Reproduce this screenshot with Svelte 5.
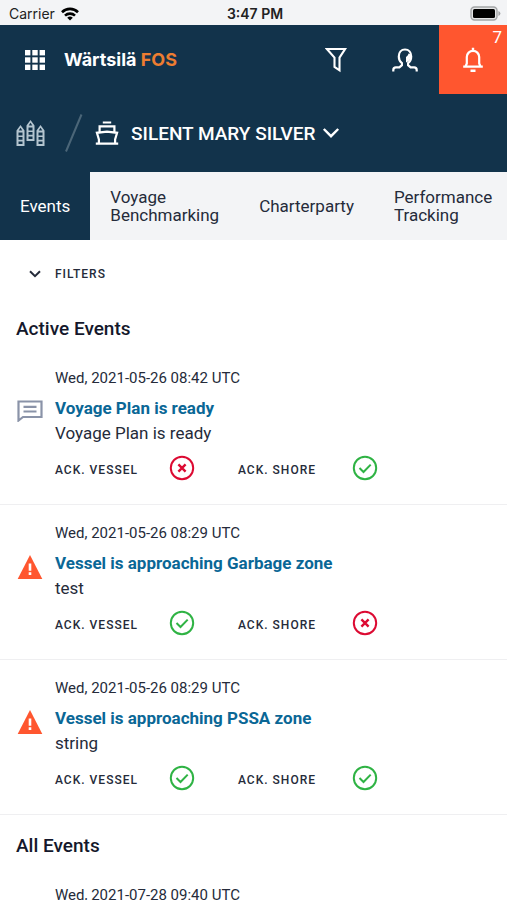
<script>
  const tabs = ['Events', 'Voyage\nBenchmarking', 'Charterparty', 'Performance\nTracking'];
  let active = $state(0);

  const activeEvents = [
    { date: 'Wed, 2021-05-26 08:42 UTC', title: 'Voyage Plan is ready', text: 'Voyage Plan is ready', kind: 'message', vessel: false, shore: true },
    { date: 'Wed, 2021-05-26 08:29 UTC', title: 'Vessel is approaching Garbage zone', text: 'test', kind: 'warning', vessel: true, shore: false },
    { date: 'Wed, 2021-05-26 08:29 UTC', title: 'Vessel is approaching PSSA zone', text: 'string', kind: 'warning', vessel: true, shore: true }
  ];
  const allEvents = [{ date: 'Wed, 2021-07-28 09:40 UTC' }];
</script>

{#snippet ack(label, ok)}
  <dt>{label}</dt>
  <dd>
    <svg width="26" height="26" viewBox="0 0 26 26" fill="none" role="img" aria-label={ok ? 'Acknowledged' : 'Not acknowledged'}>
      {#if ok}
        <circle cx="13" cy="13" r="11.2" stroke="#2fb344" stroke-width="2" />
        <path d="M7.5 13l4 4 7.2-7.4" stroke="#2fb344" stroke-width="2" />
      {:else}
        <circle cx="13" cy="13" r="11.2" stroke="#dc0a32" stroke-width="2" />
        <path d="M9.4 9.4l7.2 7.2M16.6 9.4l-7.2 7.2" stroke="#dc0a32" stroke-width="2.4" />
      {/if}
    </svg>
  </dd>
{/snippet}

<div class="screen">
  <div class="status">
    <span class="carrier">
      Carrier
      <svg width="18" height="14" viewBox="0 0 18 14" fill="none" stroke="#000" stroke-width="2.6">
        <path d="M1 5.2a11.4 11.4 0 0 1 16 0M4 8.6a7.2 7.2 0 0 1 10 0" />
        <path d="M9 13.6L6.2 10.8a4 4 0 0 1 5.6 0z" fill="#000" stroke="none" />
      </svg>
    </span>
    <span class="time">3:47 PM</span>
    <span class="battery">
      <svg width="31" height="15" viewBox="0 0 31 15">
        <rect x="1" y="1" width="26" height="13" rx="3.5" fill="#e4e5e6" stroke="#a3a5a7" stroke-width="1.4" />
        <rect x="3" y="3" width="22" height="9" rx="1.5" />
        <path d="M28.4 5v5q2-.8 2-2.5t-2-2.5z" fill="#a3a5a7" />
      </svg>
    </span>
  </div>

  <header>
    <div class="bar">
      <button class="apps" aria-label="Applications">
        <svg width="20" height="20" viewBox="0 0 20 20" fill="#fff">
          {#each [0, 7.3, 14.6] as y}
            {#each [0, 7.3, 14.6] as x}
              <rect {x} {y} width="5.4" height="5.4" />
            {/each}
          {/each}
        </svg>
      </button>
      <a class="brand" href="#home">Wärtsilä <span>FOS</span></a>
      <button class="tool" aria-label="Filter">
        <svg width="24" height="26" viewBox="0 0 24 26" fill="none" stroke="#fff" stroke-width="2.1">
          <path d="M1.9 2h18.2l-5.6 8.6v12.7l-5-3.4v-9.300z" />
        </svg>
      </button>
      <button class="tool" aria-label="Profile">
        <svg width="26" height="24" viewBox="0 0 26 24" fill="none" stroke="#fff" stroke-width="2.2">
          <path d="M1.300 23.500v-1.500c0-1.600 1-2.600 2.600-2.600h3.500l2.500-2.200v-2.100c-2-1.500-3.100-3.800-3.100-6.600 0-4.200 2.500-7 6.200-7s6.200 2.800 6.200 7c0 2.800-1.100 5.100-3.100 6.600v2.100l2.500 2.200h3.500c1.600 0 2.600 1 2.600 2.600v1.500" />
          <path d="M14 14.500V9c1.400-.8 2.200-2 2.500-3.500l2.500 1c.3 3.700-1.500 6.800-5 8z" fill="#fff" stroke="none" />
        </svg>
      </button>
      <button class="tool alert" aria-label="Notifications">
        <svg width="22" height="26" viewBox="0 0 22 26" fill="none" stroke="#fff" stroke-width="2.2">
          <path d="M1.2 19.700h19.600M3.500 19.500l1.300-3V10a6.200 6.200 0 0 1 12.400 0v6.500l1.300 3" />
          <path d="M11 .8v3M8.500 23.800h5" stroke-width="2.4" />
        </svg>
        <span class="count">7</span>
      </button>
    </div>

    <nav class="crumbs" aria-label="Vessel">
      <a href="#fleet" aria-label="Fleet">
        <svg width="29" height="28" viewBox="0 0 29 28" fill="#b4c5cf" fill-rule="evenodd">
          {#each [[0.500, 6], [10.500, 1], [20.500, 6]] as [x, y]}
            <path
              transform="translate({x} {y})"
              d="M4 0L8 5.500V21H0V5.500zM4 2.800L2.200 5.600h3.600zM2 7.600v2.800h4V7.600zM2 12v2.800h4V12zM2 16.400v2.600h4v-2.600z"
            />
          {/each}
        </svg>
      </a>
      <svg class="slash" width="18" height="38" viewBox="0 0 18 38" stroke="#4b6678" stroke-width="2"><path d="M1 37.500L16.500 0.500" /></svg>
      <button class="vessel">
        <svg width="24" height="24" viewBox="0 0 24 24" fill="none" stroke="#fff" stroke-width="2.2">
          <path d="M7.800 1.500h8.400M4.600 11V5.300h14.800V11M3.900 22.500v-4L1.900 11.800 12 10.600l10.100 1.200-2 6.700v4M.8 22.700h22.400" />
        </svg>
        <span>SILENT MARY SILVER</span>
        <svg width="18" height="12" viewBox="0 0 18 12" fill="none" stroke="#fff" stroke-width="2.4"><path d="M1.800 2L9 9.200 16.200 2" /></svg>
      </button>
    </nav>
  </header>

  <div class="tabs" role="tablist">
    {#each tabs as tab, i}
      <button role="tab" aria-selected={active === i} class:active={active === i} onclick={() => (active = i)}>{tab}</button>
    {/each}
  </div>

  <main>
    <button class="filters">
      <svg width="12" height="8" viewBox="0 0 12 8" fill="none" stroke="#252b3a" stroke-width="2"><path d="M1 1.200L6 6.200l5-5" /></svg>
      <span>FILTERS</span>
    </button>

    <h2>Active Events</h2>
    {#each activeEvents as event}
      <article>
        <div class="kind">
          {#if event.kind === 'message'}
            <svg width="26" height="22" viewBox="0 0 26 22" fill="none" stroke="#8a93a8" stroke-width="2.2">
              <path d="M1.500 1.500h23v15.500H6L1.500 20.500zM6.500 6.800h13M6.500 11.500h13" />
            </svg>
          {:else}
            <svg width="26" height="24" viewBox="0 0 26 24">
              <path d="M13 0l12.300 24H.7z" fill="#ff562f" />
              <path d="M13 8.500v7.200M13 17.300v2.800" stroke="#fff" stroke-width="2.6" />
            </svg>
          {/if}
        </div>
        <div class="body">
          <time>{event.date}</time>
          <h3><a href="#event">{event.title}</a></h3>
          <p>{event.text}</p>
          <dl>
            {@render ack('ACK. VESSEL', event.vessel)}
            {@render ack('ACK. SHORE', event.shore)}
          </dl>
        </div>
      </article>
    {/each}

    <h2>All Events</h2>
    {#each allEvents as event}
      <article>
        <div class="kind"></div>
        <div class="body"><time>{event.date}</time></div>
      </article>
    {/each}
  </main>
</div>

<style>
  :global(body) { margin: 0; background: #fff; }
  .screen {
    display: flex;
    flex-direction: column;
    height: 100vh;
    overflow: hidden;
    font-family: Roboto, "Liberation Sans", sans-serif;
    color: #252b3a;
  }
  button {
    border: 0;
    padding: 0;
    background: none;
    font: inherit;
    color: inherit;
    cursor: pointer;
  }
  a { text-decoration: none; color: inherit; }
  svg { display: block; flex: none; }

  .status {
    flex: none;
    display: grid;
    grid-template-columns: 1fr auto 1fr;
    align-items: center;
    height: 25px;
    padding: 2px 6px 0 9px;
    box-sizing: border-box;
    background: #f3f4f6;
    font-family: Inter, "Liberation Sans", sans-serif;
    font-size: 14px;
    color: #222;
  }
  .carrier { display: flex; align-items: center; gap: 6px; }
  .time { font-weight: 600; }
  .battery { justify-self: end; }

  header { flex: none; background: #12334b; color: #fff; }
  .bar { display: flex; align-items: stretch; height: 69px; }
  .apps { display: grid; place-items: center; width: 70px; }
  .brand {
    flex: 1;
    align-self: center;
    margin-left: -6px;
    font-family: Inter, "Liberation Sans", sans-serif;
    font-size: 18px;
    font-weight: 700;
  }
  .brand span { color: #ed7d31; }
  .tool { position: relative; display: grid; place-items: center; width: 68px; }
  .alert { background: #ff562f; }
  .count { position: absolute; top: 2px; right: 5px; font-size: 17px; line-height: 20px; }

  .crumbs {
    display: flex;
    align-items: center;
    height: 78px;
    padding-left: 16px;
  }
  .slash { margin: 0 12px 0 20px; }
  .vessel { display: flex; align-items: center; gap: 12px; font-size: 19px; font-weight: 500; }
  .vessel span { margin-right: -6px; }

  .tabs { flex: none; display: flex; height: 68px; background: #f3f4f6; overflow: hidden; }
  .tabs button {
    flex: none;
    padding: 0 20px;
    font-size: 17px;
    line-height: 18px;
    text-align: left;
    white-space: pre-line;
  }
  .tabs .active { background: #12334b; color: #fff; }

  main { flex: 1; min-height: 0; overflow-y: auto; scrollbar-width: none; }
  .filters {
    display: flex;
    align-items: center;
    gap: 14px;
    height: 58px;
    padding: 10px 29px 0;
    font-size: 12px;
    font-weight: 500;
    letter-spacing: 1px;
  }
  h2 {
    margin: 0;
    padding: 19px 16px 9px;
    font-size: 19px;
    line-height: 24px;
    font-weight: 500;
    color: #14182b;
  }
  article {
    display: flex;
    padding: 18px 16px 23px;
    border-bottom: 1px solid #efeff1;
  }
  .kind { width: 39px; padding-top: 32px; }
  .kind svg { margin-left: 1px; }
  .body { flex: 1; }
  time { display: block; font-size: 15px; line-height: 20px; }
  h3 { margin: 8px 0 0; font-size: 17px; line-height: 25px; font-weight: 700; color: #0a6796; }
  p { margin: 0; font-size: 17px; line-height: 24px; }
  dl { display: flex; align-items: center; margin: 10px 0 0; }
  dt {
    width: 114px;
    padding-top: 4px;
    font-size: 12px;
    font-weight: 500;
    line-height: 20px;
    letter-spacing: 1px;
  }
  dd { width: 69px; margin: 0; }
</style>
